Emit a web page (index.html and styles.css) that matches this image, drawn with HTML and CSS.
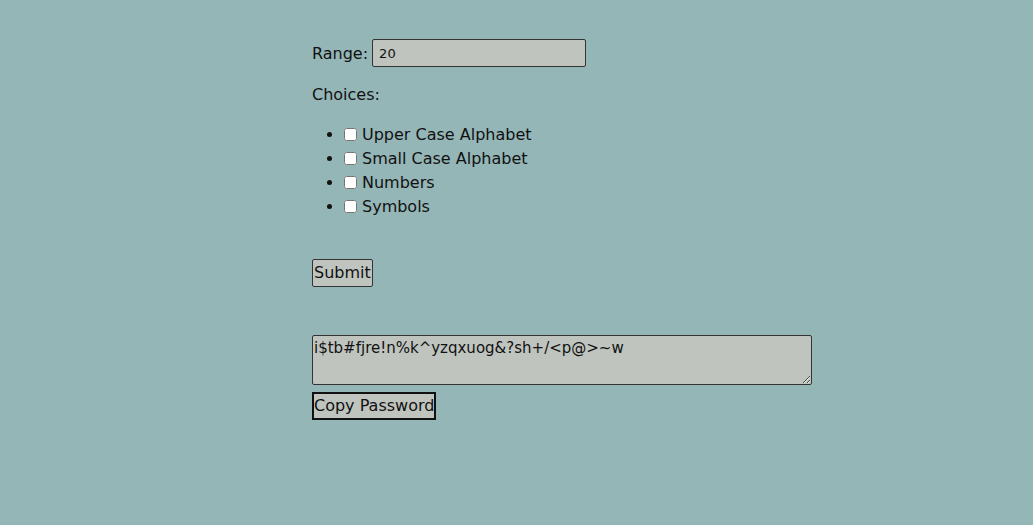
FILE: index.html
```html
<!DOCTYPE html>
<html>
<head>
<meta charset="utf-8">
<link rel="stylesheet" href="styles.css">
</head>
<body>
<main class="app">
  <div class="range-row">
    <label for="range" class="label">Range:</label>
    <input id="range" class="range-input" type="text" value="20">
  </div>
  <p class="choices-title">Choices:</p>
  <ul class="choices">
    <li><input type="checkbox" class="check"><span>Upper Case Alphabet</span></li>
    <li><input type="checkbox" class="check"><span>Small Case Alphabet</span></li>
    <li><input type="checkbox" class="check"><span>Numbers</span></li>
    <li><input type="checkbox" class="check"><span>Symbols</span></li>
  </ul>
  <div class="submit-row"><button class="btn">Submit</button></div>
  <textarea class="output">i$tb#fjre!n%k^yzqxuog&amp;?sh+/&lt;p@&gt;~w</textarea>
  <div class="copy-row"><button class="btn btn-copy">Copy Password</button></div>
</main>
</body>
</html>
```
FILE: styles.css
```css
html, body {
  margin: 0;
  padding: 0;
  background: #95b6b7;
}
body {
  font-family: "DejaVu Sans", sans-serif;
  font-size: 16px;
  color: #111;
  height: 525px;
}
.app {
  padding: 39px 0 0 312px;
  display: flex;
  flex-direction: column;
  align-items: flex-start;
}
.range-row {
  display: flex;
  align-items: center;
  gap: 4px;
}
.label {
  font-size: 16px;
}
.range-input {
  width: 214px;
  height: 28px;
  box-sizing: border-box;
  border: 1px solid #333;
  border-radius: 2px;
  background: #bfc4bf;
  font-family: "DejaVu Sans", sans-serif;
  font-size: 13px;
  padding: 0 6px;
  color: #111;
}
.choices-title {
  margin: 18px 0 0 0;
  line-height: 20px;
}
.choices {
  margin: 18px 0 0 0;
  padding-left: 32px;
  list-style: disc;
}
.choices li {
  line-height: 24px;
}
.check {
  margin: 0 5px 0 0;
  width: 13px;
  height: 13px;
  vertical-align: -1px;
}
.submit-row {
  margin-top: 40px;
}
.btn {
  font-family: "DejaVu Sans", sans-serif;
  font-size: 16px;
  color: #111;
  background: #bfc4bf;
  border: 1px solid #333;
  border-radius: 2px;
  padding: 2px 1px;
  line-height: 22px;
}
.output {
  margin-top: 48px;
  width: 500px;
  height: 50px;
  box-sizing: border-box;
  background: #bfc4bf;
  border: 1px solid #333;
  border-radius: 2px;
  font-family: "DejaVu Sans", sans-serif;
  font-size: 15px;
  padding: 3px 1px;
  color: #111;
  resize: vertical;
}
.copy-row {
  margin-top: 7px;
}
.btn-copy {
  border: 2px solid #111;
  border-radius: 0;
  padding: 1px 0;
}
```
